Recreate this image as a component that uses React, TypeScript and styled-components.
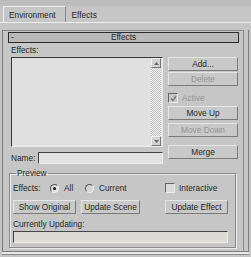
import React from "react";
import styled, { createGlobalStyle } from "styled-components";

const GlobalStyle = createGlobalStyle`
  html, body {
    margin: 0;
    padding: 0;
    background: #c6c6c6;
  }
  body {
    font-family: "Liberation Sans", Arial, sans-serif;
    font-size: 8.3px;
    color: #262626;
  }
`;

const Window = styled.div`
  width: 251px;
  height: 257px;
  background: #c6c6c6;
  overflow: hidden;
`;

const TabBar = styled.div`
  height: 22px;
  display: flex;
  align-items: flex-end;
  padding-left: 3px;
  background: linear-gradient(#bcbcbc 0 5px, #c6c6c6 7px);
  border-bottom: 1px solid #ededed;
`;

const Tab = styled.div<{ $active?: boolean }>`
  height: 15px;
  display: flex;
  align-items: center;
  padding: 0 9px 0 5px;
  border-top: 1px solid ${(p) => (p.$active ? "#ededed" : "transparent")};
  border-left: 1px solid ${(p) => (p.$active ? "#ededed" : "transparent")};
  border-right: 1px solid ${(p) => (p.$active ? "#8a8a8a" : "transparent")};
  padding-right: ${(p) => (p.$active ? "9px" : "5px")};
`;

const Panel = styled.div`
  margin: 7px 2px 0 2px;
  height: 221px;
  border-left: 1px solid #7c7c7c;
  border-right: 1px solid #7c7c7c;
  border-bottom: 1px solid #7c7c7c;
  box-shadow: 0 2px 0 #e8e8e8, 0 3px 0 #8a8a8a;
  padding-right: 4px;
`;

const Rollout = styled.div`
  height: 220px;
  border-top: 1px solid #8a8a8a;
  border-right: 1px solid #8a8a8a;
  padding: 1px 4px 0 5px;
`;

const RolloutHeader = styled.div`
  height: 9px;
  border: 1px solid #2c2c2c;
  background: #b9b9b9;
  display: flex;
  align-items: center;
  line-height: 9px;
`;

const Collapse = styled.span`
  width: 10px;
  padding-left: 2px;
`;

const HeaderTitle = styled.span`
  flex: 1;
  text-align: center;
  margin-right: 12px;
`;

const Body = styled.div`
  display: grid;
  grid-template-columns: 152px 70px;
  column-gap: 5px;
  padding-left: 3px;
`;

const LeftCol = styled.div`
  display: flex;
  flex-direction: column;
`;

const FieldLabel = styled.div`
  height: 14px;
  line-height: 15px;
`;

const ListBox = styled.div`
  height: 88px;
  display: flex;
  background: #e0e0e0;
  border-top: 1px solid #3a3a3a;
  border-left: 1px solid #3a3a3a;
  border-right: 1px solid #ececec;
  border-bottom: 1px solid #ececec;
`;

const ListArea = styled.div`
  flex: 1;
`;

const ScrollBar = styled.div`
  width: 10px;
  display: flex;
  flex-direction: column;
  justify-content: space-between;
  background: repeating-conic-gradient(#c6c6c6 0 25%, #efefef 0 50%) 0 0 / 2px 2px;
  margin-right: 1px;
`;

const ArrowButton = styled.div`
  background: #d2d2d2;
  border-top: 1px solid #f0f0f0;
  border-left: 1px solid #f0f0f0;
  border-right: 1px solid #7a7a7a;
  border-bottom: 1px solid #7a7a7a;
  box-sizing: border-box;
  height: 10px;
  display: flex;
  align-items: center;
  justify-content: center;
`;

const NameRow = styled.div`
  margin-top: 5px;
  display: flex;
  align-items: center;
  gap: 3px;
`;

const TextField = styled.div<{ $tint?: string }>`
  flex: 1;
  height: 10px;
  background: ${(p) => p.$tint || "#e2e2e2"};
  border-top: 1px solid #444;
  border-left: 1px solid #444;
  border-right: 1px solid #ededed;
  border-bottom: 1px solid #ededed;
`;

const RightCol = styled.div`
  display: flex;
  flex-direction: column;
  padding-top: 14px;
`;

const Button = styled.div<{ $disabled?: boolean; $gap?: number; $w?: number }>`
  height: 12px;
  margin-top: ${(p) => p.$gap ?? 0}px;
  width: ${(p) => (p.$w ? `${p.$w}px` : "auto")};
  display: flex;
  align-items: center;
  justify-content: center;
  color: ${(p) => (p.$disabled ? "#939393" : "#262626")};
  background: #c9c9c9;
  border-top: 1px solid #e6e6e6;
  border-left: 1px solid #e6e6e6;
  border-right: 1px solid #7a7a7a;
  border-bottom: 1px solid #7a7a7a;
  white-space: nowrap;
`;

const CheckRow = styled.div<{ $disabled?: boolean; $gap?: number }>`
  height: 10px;
  margin-top: ${(p) => p.$gap ?? 0}px;
  display: flex;
  align-items: center;
  gap: 4px;
  color: ${(p) => (p.$disabled ? "#939393" : "#262626")};
`;

const CheckBox = styled.div<{ $disabled?: boolean }>`
  width: 8px;
  height: 8px;
  background: ${(p) => (p.$disabled ? "#c8c8c8" : "#dadada")};
  border-top: 1px solid #666;
  border-left: 1px solid #666;
  border-right: 1px solid #ececec;
  border-bottom: 1px solid #ececec;
  display: flex;
  align-items: center;
  justify-content: center;
`;

const Group = styled.fieldset`
  margin: 5px 3px 0 1px;
  padding: 5px 8px 4px 3px;
  border: 1px solid #8a8a8a;
  box-shadow: inset 1px 1px 0 #ececec, 1px 1px 0 #ececec;
  min-width: 0;
`;

const Legend = styled.legend`
  padding: 0 1px;
  margin-left: 3px;
  line-height: 9px;
`;

const GroupGrid = styled.div`
  display: grid;
  grid-template-columns: 147px 63px;
  column-gap: 5px;
  row-gap: 7px;
`;

const RadioRow = styled.div`
  display: flex;
  align-items: center;
  height: 10px;
`;

const RadioLabel = styled.span<{ $w: number }>`
  width: ${(p) => p.$w}px;
`;

const Radio = styled.span<{ $on?: boolean }>`
  width: 7px;
  height: 7px;
  border-radius: 50%;
  border: 1px solid;
  border-color: #555 #ececec #ececec #555;
  background: ${(p) => (p.$on ? "#e4e4e4" : "#d4d4d4")};
  display: inline-flex;
  align-items: center;
  justify-content: center;
  margin-right: 5px;
  &::after {
    content: "";
    width: 3px;
    height: 3px;
    border-radius: 50%;
    background: ${(p) => (p.$on ? "#111" : "transparent")};
  }
`;

const ButtonPair = styled.div`
  display: flex;
  gap: 5px;
`;

const Wide = styled.div`
  grid-column: 1 / span 2;
`;

const UpdatingLabel = styled(Wide)`
  margin-top: -2px;
  line-height: 11px;
`;

const UpdatingField = styled(Wide)`
  display: flex;
  margin-top: -6px;
`;

const Tri = ({ down }: { down?: boolean }) => (
  <svg width="5" height="3" viewBox="0 0 5 3">
    <polygon points={down ? "0,0 5,0 2.5,3" : "0,3 5,3 2.5,0"} fill="#6a6a6a" />
  </svg>
);

const Check = () => (
  <svg width="7" height="7" viewBox="0 0 7 7">
    <polyline points="1,3.5 3,5.5 6,1" fill="none" stroke="#7a7a7a" strokeWidth="1.4" />
  </svg>
);

export default function App() {
  return (
    <>
      <GlobalStyle />
      <Window>
        <TabBar>
          <Tab $active>Environment</Tab>
          <Tab>Effects</Tab>
        </TabBar>
        <Panel>
          <Rollout>
            <RolloutHeader>
              <Collapse>-</Collapse>
              <HeaderTitle>Effects</HeaderTitle>
            </RolloutHeader>
            <Body>
              <LeftCol>
                <FieldLabel>Effects:</FieldLabel>
                <ListBox>
                  <ListArea />
                  <ScrollBar>
                    <ArrowButton>
                      <Tri />
                    </ArrowButton>
                    <ArrowButton>
                      <Tri down />
                    </ArrowButton>
                  </ScrollBar>
                </ListBox>
                <NameRow>
                  <span>Name:</span>
                  <TextField />
                </NameRow>
              </LeftCol>
              <RightCol>
                <Button>Add...</Button>
                <Button $disabled $gap={1}>Delete</Button>
                <CheckRow $disabled $gap={7}>
                  <CheckBox $disabled>
                    <Check />
                  </CheckBox>
                  Active
                </CheckRow>
                <Button $gap={3}>Move Up</Button>
                <Button $disabled $gap={3}>Move Down</Button>
                <Button $gap={8}>Merge</Button>
              </RightCol>
            </Body>
            <Group>
              <Legend>Preview</Legend>
              <GroupGrid>
                <RadioRow>
                  <RadioLabel $w={37}>Effects:</RadioLabel>
                  <Radio $on />
                  <RadioLabel $w={21}>All</RadioLabel>
                  <Radio />
                  <span>Current</span>
                </RadioRow>
                <CheckRow>
                  <CheckBox />
                  Interactive
                </CheckRow>
                <ButtonPair>
                  <Button $w={61}>Show Original</Button>
                  <Button $w={57}>Update Scene</Button>
                </ButtonPair>
                <Button>Update Effect</Button>
                <UpdatingLabel>Currently Updating:</UpdatingLabel>
                <UpdatingField>
                  <TextField $tint="#dcdad2" />
                </UpdatingField>
              </GroupGrid>
            </Group>
          </Rollout>
        </Panel>
      </Window>
    </>
  );
}
